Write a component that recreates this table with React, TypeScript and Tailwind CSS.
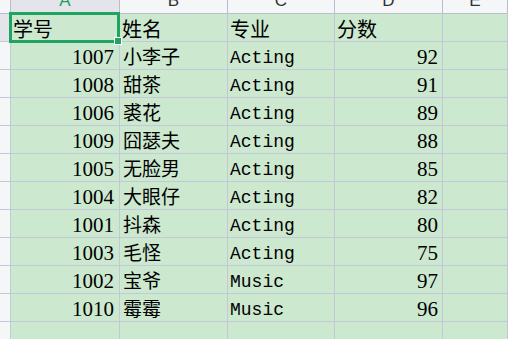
import React from "react";

const rows: [string, string, string, string][] = [
  ["1007", "小李子", "Acting", "92"],
  ["1008", "甜茶", "Acting", "91"],
  ["1006", "裘花", "Acting", "89"],
  ["1009", "囧瑟夫", "Acting", "88"],
  ["1005", "无脸男", "Acting", "85"],
  ["1004", "大眼仔", "Acting", "82"],
  ["1001", "抖森", "Acting", "80"],
  ["1003", "毛怪", "Acting", "75"],
  ["1002", "宝爷", "Music", "97"],
  ["1010", "霉霉", "Music", "96"],
];

const cjk = { fontFamily: '"Noto Sans CJK SC", sans-serif' };
const num = { fontFamily: '"Liberation Serif", "Noto Sans CJK SC", serif' };
const mono = { fontFamily: '"Liberation Mono", monospace' };

const cols = "grid grid-cols-[11px_109px_108px_107px_108px_1fr]";
const cell = "h-[28px] border-r border-b border-[#c2c7d9] bg-[#cce8cf] flex items-center overflow-hidden text-black";

export default function App() {
  return (
    <div className="relative w-[508px] h-[339px] overflow-hidden bg-[#cce8cf]">
      {/* column headers */}
      <div className={cols}>
        <div className="h-[14px] bg-[#f5f6f8] border-r border-b border-[#b9bece]" />
        {["A", "B", "C", "D", "E"].map((l, i) => (
          <div
            key={l}
            className={`h-[14px] border-r border-b border-[#b9bece] overflow-hidden flex justify-center items-end pb-[4px] ${
              i === 0 ? "bg-[#e3e5eb] text-[#1f9e5f]" : "bg-[#f5f6f8] text-[#333]"
            }`}
          >
            <span className="text-[17px] leading-[16px]" style={{ fontFamily: '"Liberation Sans", sans-serif' }}>
              {l}
            </span>
          </div>
        ))}
      </div>
      {/* header row of data */}
      <div className={cols}>
        <div className="h-[28px] bg-[#e3e5eb] border-r border-b border-[#c2c7d9]" />
        {["学号", "姓名", "专业", "分数"].map((t) => (
          <div key={t} className={`${cell} pl-[2px] pt-[2px] text-[20px]`} style={cjk}>
            {t}
          </div>
        ))}
        <div className={cell} />
      </div>
      {rows.map((r) => (
        <div key={r[0]} className={cols}>
          <div className="h-[28px] bg-[#f5f6f8] border-r border-b border-[#c2c7d9]" />
          <div className={`${cell} justify-end pr-[5px] pt-[4px] text-[21px]`} style={num}>
            {r[0]}
          </div>
          <div className={`${cell} pl-[3px] pt-[2px] text-[19px]`} style={cjk}>
            {r[1]}
          </div>
          <div className={`${cell} pl-[2px] pt-[5px] text-[18px]`} style={mono}>
            {r[2]}
          </div>
          <div className={`${cell} justify-end pr-[4px] pt-[4px] text-[21px]`} style={num}>
            {r[3]}
          </div>
          <div className={cell} />
        </div>
      ))}
      <div className={cols}>
        <div className="h-[28px] bg-[#f5f6f8] border-r border-b border-[#c2c7d9]" />
        <div className={cell} />
        <div className={cell} />
        <div className={cell} />
        <div className={cell} />
        <div className={cell} />
      </div>
      {/* selection */}
      <div className="absolute left-[9px] top-[12px] w-[111px] h-[31px] border-[3px] border-[#1fa463]" />
      <div className="absolute left-[115px] top-[38px] w-[6px] h-[6px] bg-[#1fa463] outline outline-1 outline-white" />
    </div>
  );
}
